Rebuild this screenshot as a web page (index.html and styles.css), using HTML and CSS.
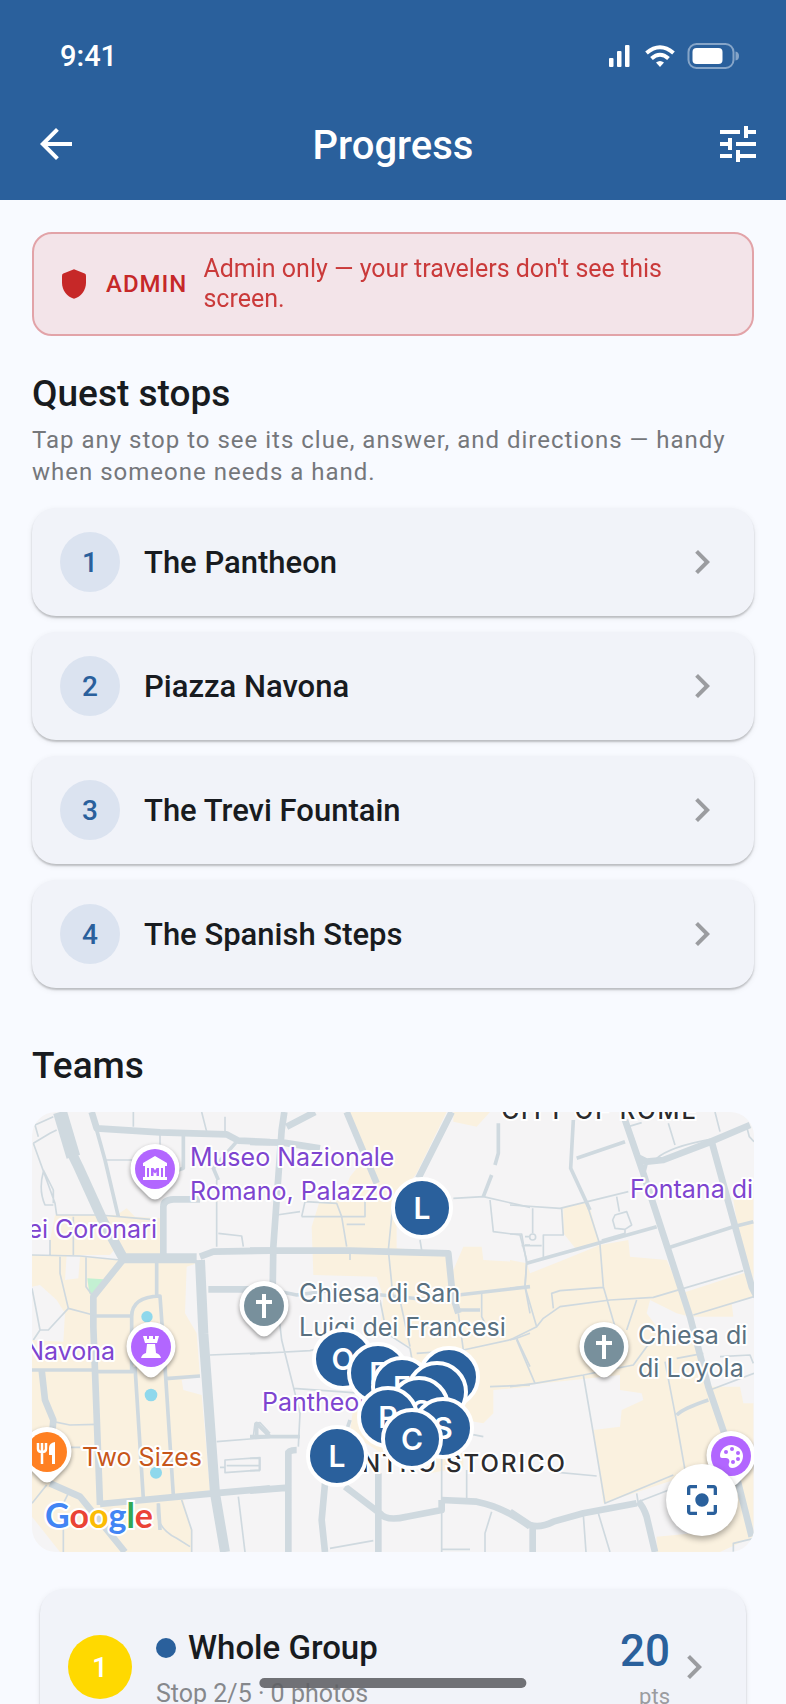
FILE: index.html
```html
<!DOCTYPE html>
<html lang="en">
<head>
<meta charset="utf-8">
<meta name="viewport" content="width=device-width, initial-scale=1">
<title>Progress</title>
<link rel="stylesheet" href="styles.css">
</head>
<body>
<div class="screen">
  <header class="header">
    <div class="status">
      <span class="clock">9:41</span>
      <svg class="status-icons" viewBox="0 0 132 28" aria-hidden="true">
        <g fill="#fff"><rect x="1" y="16" width="4.500" height="9" rx="1"/><rect x="9" y="9" width="4.500" height="16" rx="1"/><rect x="17" y="3" width="4.500" height="22" rx="1"/></g>
        <g fill="none" stroke="#fff" stroke-width="4"><path d="M38.500 11Q52 -0.500 65.500 11"/><path d="M43.500 16.500Q52 9 60.500 16.500"/></g>
        <path d="M48 20.500Q52 17.500 56 20.500L52 25Z" fill="#fff"/>
        <rect x="80.500" y="2" width="45" height="24" rx="8" fill="none" stroke="#86a5c8" stroke-width="2"/>
        <rect x="84.500" y="6" width="30" height="16" rx="4" fill="#fff"/>
        <path d="M127.500 9.500Q131 10 131 14T127.500 18.500Z" fill="#86a5c8"/>
      </svg>
    </div>
    <div class="appbar">
      <button class="icon-button back" aria-label="Back"><svg class="icon" viewBox="0 0 24 24"><path d="M20 11H7.830l5.590-5.590L12 4l-8 8 8 8 1.410-1.410L7.830 13H20z"/></svg></button>
      <h1 class="title">Progress</h1>
      <button class="icon-button filters" aria-label="Filters"><svg class="icon" viewBox="0 0 24 24"><path d="M3 17v2h6v-2H3zM3 5v2h10V5H3zm10 16v-2h8v-2h-8v-2h-2v6h2zM7 9v2H3v2h4v2h2V9H7zm14 4v-2H11v2h10zm-6-4h2V7h4V5h-4V3h-2v6z"/></svg></button>
    </div>
  </header>

  <main class="content">
    <section class="banner">
      <svg class="shield" viewBox="0 0 24 24" aria-hidden="true"><path d="M12 1 20 4.200Q21 4.600 21 5.800V11c0 5.500-3.600 10.500-9 12-5.400-1.500-9-6.500-9-12V5.800Q3 4.600 4 4.200Z"/></svg>
      <strong class="badge">ADMIN</strong>
      <p class="banner-text">Admin only — your travelers don't see this screen.</p>
    </section>

    <h2 class="heading">Quest stops</h2>
    <p class="hint">Tap any stop to see its clue, answer, and directions — handy when someone needs a hand.</p>

    <div class="stops">
      <button class="card"><span class="number">1</span><span class="name">The Pantheon</span><svg class="chevron" viewBox="0 0 24 24"><path d="M10 6 8.590 7.410 13.170 12l-4.580 4.590L10 18l6-6z"/></svg></button>
      <button class="card"><span class="number">2</span><span class="name">Piazza Navona</span><svg class="chevron" viewBox="0 0 24 24"><path d="M10 6 8.590 7.410 13.170 12l-4.580 4.590L10 18l6-6z"/></svg></button>
      <button class="card"><span class="number">3</span><span class="name">The Trevi Fountain</span><svg class="chevron" viewBox="0 0 24 24"><path d="M10 6 8.590 7.410 13.170 12l-4.580 4.590L10 18l6-6z"/></svg></button>
      <button class="card"><span class="number">4</span><span class="name">The Spanish Steps</span><svg class="chevron" viewBox="0 0 24 24"><path d="M10 6 8.590 7.410 13.170 12l-4.580 4.590L10 18l6-6z"/></svg></button>
    </div>

    <h2 class="heading teams-heading">Teams</h2>
    <div class="map">
      <svg class="map-canvas" viewBox="32 12 722 440" preserveAspectRatio="xMidYMid slice" role="img" aria-label="Map of team positions">
        <defs>
          <g id="pin"><path class="pin-body" d="M-18 16A24.500 24.500 0 1 1 18 16L6 28Q0 33 -6 28Z"/></g>
          <g id="church"><use href="#pin"/><circle r="20" fill="#78909c"/><path d="M-2 -12h4v6h6v4h-6v14h-4V-2H-8v-4h6z" fill="#fff"/></g>
        </defs>

        <!-- built-up areas -->
        <g class="area" transform="scale(.33333)">
          <path d="M165 345 350 345 380 325 405 350 490 355 485 462 375 465 350 440 330 465H150L150 420Z"/>
          <path d="M96 465H200L195 540 235 535 240 470 360 480 590 490 560 500 555 640 590 700 600 830 545 840 550 870 605 885 630 1170 550 1200 575 1290 575 1356H180L96 1250V720L190 725 195 640 170 600 120 555 96 560Z"/>
        </g>
        <g class="area" transform="translate(250) scale(.33333)">
          <path d="M300 36H590L500 220 440 300 440 445 590 460 610 510 640 440 695 440 700 480 785 485 790 530 840 560 840 860 730 870 730 940 700 970 640 960 640 1100 540 1120 460 1100 300 1000 310 920 480 900 480 740 390 690 400 590 380 530 190 525 185 380 210 300 280 280 300 230 340 180Z"/>
          <path d="M610 36H720L680 80 610 65Z"/>
        </g>
        <g class="area" transform="translate(510) scale(.33333)">
          <path d="M0 480 50 490 60 520 160 480 270 435 355 420 360 470 470 480 515 580 730 510 730 590 665 610 670 650 540 650 500 640 420 600 410 640 440 680 560 720 600 860 690 860 700 910 730 910V1310L630 1356H440V1310L550 1300 520 1130 280 1210 250 990 330 980 335 930 400 900 395 880 330 870 330 825 0 860Z"/>
          <path d="M160 320 235 305 270 435 200 450 160 400Z"/><path d="M670 300 730 290V520L705 515Z"/>
        </g>
        <g transform="scale(.33333)"><path d="M262 535 310 538 280 590 268 580Z" fill="#c3f0d2"/><g fill="#8fd8ec"><circle cx="441" cy="650" r="17"/><circle cx="453" cy="885" r="19"/><circle cx="468" cy="1118" r="18"/></g></g>

        <!-- streets, west -->
        <g class="street" transform="scale(.33333)">
          <path class="w40" d="M180 36 220 170"/>
          <path class="w30" d="M218 165 235 200 310 365 370 475H590M600 480 610 700 645 1180 675 1356"/>
          <path class="w20" d="M275 36 290 85 480 97 680 103 715 122 810 126M600 470 640 455 810 452M490 465V320Q490 300 520 298H600M370 478 280 590V680L300 1215M300 1212 640 1180 810 1165M125 810 135 900 160 960 155 1020M150 1150 240 1190 375 1356M625 568H810"/>
          <path class="w12" d="M290 90 315 180 355 350M470 485V590M395 820V650Q395 590 480 588L495 800 520 1185M395 648H285M405 800 430 1195M550 100V205L520 215M290 815H400M498 836 600 828M96 810H280M655 240 640 205 710 125M475 1210 480 1290"/>
          <path class="w6" d="M400 36V80M605 36 620 95M675 50V100M480 100V145M315 180H410M650 240V440M655 400 725 408 730 440M130 215Q115 270 135 315H160M100 130 165 310 170 345H300L450 358M100 130 150 100 170 90M105 75 115 110M105 75 160 50M130 210 160 270V310M150 420V465M220 350V465M96 465 240 468 360 480M258 470V560L280 590M180 470V520L205 625 280 645M96 565 120 690H145L205 625M120 690 100 720M630 765 810 758M160 965 210 975 290 973M160 1042H240M205 1180 190 1210M140 1155 96 1210M190 1250V1356M475 1210Q460 1280 530 1315L570 1340M545 1200 575 1290V1356M650 1025 810 1012M675 1080 780 1073V1110L675 1118ZM660 1102H675M680 1097H780M760 1010 765 970 780 968 810 1000M715 1190 735 1356"/>
        </g>
        <!-- streets, centre -->
        <g class="street" transform="translate(250) scale(.33333)">
          <path class="w20" d="M103 36 95 90 70 440 68 570M0 126 100 128 210 145M0 452H300L595 460 605 560M110 80 195 36M290 36 380 250M605 36 505 235M115 1356V1060Q115 1050 140 1050M0 1172 115 1163M225 1356 215 1260 225 1150M385 1120V1356M285 1160 390 1240Q410 1265 470 1250L575 1230V1200M575 1200 680 1205Q760 1220 840 1280M600 560 625 640"/>
          <path class="w12" d="M68 570 140 585 250 570 540 600M745 70 745 160 735 195M725 225 700 290M0 1010H150M20 1010V970L60 1010M300 960 290 990M625 585 840 560M620 630H690"/>
          <path class="w6" d="M80 345 150 335M155 350 165 305 260 310 275 350 290 440M155 350H345V300M290 373H345M300 460V480M430 300 415 450 430 600M510 420 515 450M610 295 700 290 840 322M720 300 730 395 810 405 830 480 825 560 840 640M825 410H840M825 435H840M830 488 840 488M80 590 95 720 150 940 145 1040M0 762 180 752 230 740M130 865 340 880M390 600 410 700 480 745 490 800M450 600 480 740M625 640 640 750 800 715 840 700M695 580V650L720 700M800 715 840 800M640 750 500 760M720 860 840 855M650 1000 700 1010M0 1075H28V1112H0M240 1345 370 1322M575 1060V1356M650 1110V1200M725 1235 705 1300V1356M575 1348H660"/>
        </g>
        <!-- streets, east -->
        <g class="street" transform="translate(510) scale(.33333)">
          <path class="w20" d="M345 60 400 220 540 650 595 860 660 1050 725 1310M380 170 410 185 460 180 590 130 720 75M605 125 645 270 725 560 740 590M0 1235 60 1275Q90 1285 130 1265L220 1240 380 1210M68 1280V1356M385 1205Q400 1220 410 1250L435 1356"/>
          <path class="w12" d="M190 60 182 205 240 330M200 175 345 125M480 442 670 380 730 365M50 490 440 380M500 945Q520 925 595 900M410 185 400 225"/>
          <path class="w6" d="M0 315 150 325 355 275M68 325V400M0 402H35L50 490 45 560 80 680M100 480V405H160L155 325M35 437H95M320 290 328 335M315 345 350 335 365 375 345 388 315 385 308 360ZM345 388V400L275 420M230 310 270 435 280 560 315 680M130 625 125 580 150 572 280 562M0 565 45 560M0 720 80 680 100 655 150 620 300 600 430 592 700 512M380 600 350 690M355 80 395 68M475 70 495 135M440 175Q480 140 600 118M615 36 630 95M710 80 718 110 732 125M550 645 732 590M20 720 75 850M0 860 75 850 220 825 370 795 410 740 450 710M465 785 495 940 525 1110M500 775 580 760M600 870 732 820M630 770 720 765 730 790M220 825 250 1000 285 1210 490 1125M380 1180 385 1210M385 1205 490 1165M120 1115 260 1128M220 1245 228 1356M265 1240 300 1356M670 1356V1330L732 1315"/>
          <circle cx="68" cy="411" r="9" class="w6"/>
        </g>

        <g class="place purple">
          <text x="190" y="66">Museo Nazionale</text><text x="190" y="100">Romano, Palazzo</text>
          <text x="157" y="138" text-anchor="end">ei Coronari</text><text x="115" y="260" text-anchor="end">Navona</text>
          <text x="262" y="311">Pantheon</text><text x="630" y="98">Fontana di</text>
        </g>
        <g class="place slate">
          <text x="299" y="202">Chiesa di San</text><text x="299" y="236">Luigi dei Francesi</text>
          <text x="638" y="244">Chiesa di</text><text x="638" y="277">di Loyola</text>
        </g>
        <text class="place orange" x="82" y="366">Two Sizes</text>
        <text class="district" x="698" y="19" text-anchor="end">CITY OF ROME</text>
        <text class="district" x="567" y="372" text-anchor="end">CENTRO STORICO</text>

        <g transform="translate(155 69)"><use href="#pin"/><circle r="20" fill="#b266ff"/><path fill-rule="evenodd" d="M0 -13 12 -6v3H-12v-3ZM-10 -3H10V8H12V11H-12V8H-10ZM-8 -1V8H-6V-1ZM6 -1V8H8V-1ZM-4 -1V7H-1.500V3L0 4.500 1.500 3V7H4V-1H1.500L0 1.500 -1.500 -1Z" fill="#fff"/></g>
        <g transform="translate(151 247)"><use href="#pin"/><circle r="20" fill="#b266ff"/><path d="M-8 -11h4v3h2v-3h4v3h2v-3h4L6 -4H-6ZM-4 -3H4L5 6Q9 7 10 11H-10Q-9 7 -5 6Z" fill="#fff"/></g>
        <g transform="translate(47 352)"><use href="#pin"/><circle r="20" fill="#ff8022"/><path d="M-9 -9V-3Q-9 0 -5 0T-1 -3V-9M-5 -9V12" fill="none" stroke="#fff" stroke-width="2.500"/><path d="M8 -10V12H5V3H2V-4Q2 -9 8 -10Z" fill="#fff"/></g>
        <use href="#church" x="264" y="206"/><use href="#church" x="604" y="247"/>
        <g transform="translate(731 356)"><use href="#pin"/><circle r="20" fill="#b266ff"/><path d="M0 -11C7 -11 12 -6 12 0S7 12 1 12C-2 12 -3 9 -2 7S-2 2 -5 2H-9Q-11 2 -11 0C-11 -6 -6 -11 0 -11Z" fill="#fff"/><g fill="#b266ff"><circle cx="-5" cy="-4" r="2"/><circle cx="1" cy="-7" r="2"/><circle cx="7" cy="-3" r="2"/><circle cx="7" cy="3" r="2"/><circle cx="2" cy="6" r="2"/></g></g>

        <g class="team">
          <g><circle cx="343" cy="259" r="29"/><text x="343" y="270">O</text></g>
          <g><circle cx="378" cy="273" r="29"/><text x="378" y="284">F</text></g>
          <g><circle cx="402" cy="287" r="29"/><text x="402" y="298">E</text></g>
          <g><circle cx="449" cy="277" r="29"/></g>
          <g><circle cx="437" cy="292" r="29"/></g>
          <g><circle cx="419" cy="307" r="29"/><text x="421" y="322">C</text></g>
          <g><circle cx="388" cy="317" r="29"/><text x="388" y="328">R</text></g>
          <g><circle cx="443" cy="328" r="29"/><text x="443" y="339">S</text></g>
          <g><circle cx="412" cy="339" r="29"/><text x="412" y="350">C</text></g>
          <g><circle cx="337" cy="356" r="29"/><text x="337" y="367">L</text></g>
          <g><circle cx="422" cy="108" r="29"/><text x="422" y="119">L</text></g>
        </g>
        <text class="google" x="45" y="428"><tspan fill="#4285f4">G</tspan><tspan fill="#ea4335">o</tspan><tspan fill="#fbbc05">o</tspan><tspan fill="#4285f4">g</tspan><tspan fill="#34a853">l</tspan><tspan fill="#ea4335">e</tspan></text>
      </svg>
      <button class="focus" aria-label="Center map"><svg viewBox="0 0 24 24"><path d="M12 8c-2.210 0-4 1.790-4 4s1.790 4 4 4 4-1.790 4-4-1.790-4-4-4zm-7 7H3v4c0 1.100.9 2 2 2h4v-2H5v-4zM5 5h4V3H5c-1.100 0-2 .9-2 2v4h2V5zm14-2h-4v2h4v4h2V5c0-1.100-.9-2-2-2zm0 16h-4v2h4c1.100 0 2-.9 2-2v-4h-2v4z"/></svg></button>
    </div>

    <button class="card team-card">
      <span class="rank">1</span>
      <span class="team-info"><span class="team-name"><span class="dot"></span>Whole Group</span><span class="team-meta">Stop 2/5 · 0 photos</span></span>
      <span class="score"><span class="points">20</span><span class="unit">pts</span></span>
      <svg class="chevron" viewBox="0 0 24 24"><path d="M10 6 8.590 7.410 13.170 12l-4.580 4.590L10 18l6-6z"/></svg>
    </button>
  </main>
  <div class="home-indicator"></div>
</div>
</body>
</html>
```
FILE: styles.css
```css
* { box-sizing: border-box; }
body, h1, h2, p { margin: 0; }
body { background: #f8faff; color: #181b20; font-family: Roboto, "Liberation Sans", sans-serif; }
button { margin: 0; border: 0; padding: 0; background: none; color: inherit; font: inherit; text-align: left; }
svg { display: block; flex: none; }

.screen { height: 100vh; overflow: hidden; }

.header { background: #2a609c; color: #fff; }
.status { display: flex; justify-content: space-between; align-items: center; height: 100px; padding: 12px 46px 0 60px; }
.clock { font-size: 29px; font-weight: 500; line-height: 32px; }
.status-icons { width: 132px; height: 28px; }
.appbar { display: grid; grid-template-columns: 1fr auto 1fr; align-items: center; height: 100px; padding: 0 24px 12px; }
.title { font-size: 40px; font-weight: 500; line-height: 48px; padding-top: 4px; }
.icon-button, .icon { width: 48px; height: 48px; fill: #fff; }
.back { margin-left: 8px; }
.filters { justify-self: end; }

.content { padding: 32px; }
.banner { display: flex; align-items: center; gap: 16px; min-height: 104px; padding: 20px 24px; border: 2px solid #e2a3a8; border-radius: 20px; background: #f3e4e9; color: #c62828; }
.shield { width: 32px; height: 32px; fill: #c62828; }
.badge { font-size: 24px; font-weight: 500; letter-spacing: 1px; }
.banner-text { font-size: 25px; line-height: 30px; opacity: 0.9; }

.heading { margin-top: 36px; font-size: 37px; font-weight: 500; line-height: 44px; }
.hint { margin-top: 8px; color: #75777b; font-size: 24px; line-height: 32px; letter-spacing: 1px; }

.stops { display: grid; gap: 16px; margin-top: 20px; }
.card { display: flex; align-items: center; width: 100%; min-height: 108px; padding: 24px 28px; border-radius: 24px; background: #f1f3f9; box-shadow: 0 2px 2px #0003, 0 2px 6px #00000014; }
.number { display: grid; place-items: center; width: 60px; height: 60px; margin-right: 24px; border-radius: 50%; background: #dbe3f0; color: #2a609c; font-size: 28px; font-weight: 500; }
.name { flex: 1; font-size: 31px; font-weight: 500; }
.chevron { width: 48px; height: 48px; fill: #9b9ca0; }

.teams-heading { margin-top: 56px; }
.map { position: relative; height: 440px; margin-top: 24px; border-radius: 24px; overflow: hidden; background: #f5f4f5; }
.map-canvas { width: 100%; height: 100%; }
.area { fill: #faf1df; }
.street { fill: none; stroke: #cfd9df; stroke-linejoin: round; }
.w40 { stroke-width: 42; }
.w30 { stroke-width: 30; }
.w20 { stroke-width: 20; }
.w12 { stroke-width: 11; }
.w6 { stroke-width: 5; }
.place { font-family: Inter, sans-serif; font-size: 25px; stroke: #fff; stroke-width: 4px; stroke-linejoin: round; paint-order: stroke; }
.purple { fill: #7e45d0; }
.slate { fill: #597080; }
.orange { fill: #c7571a; }
.district { fill: #2b2b2d; font-family: Inter, sans-serif; font-size: 24px; font-weight: 500; letter-spacing: 2px; stroke: #fff; stroke-width: 4px; paint-order: stroke; }
.google { font-family: Lato, sans-serif; font-size: 34px; font-weight: 700; stroke: #fff; stroke-width: 4px; paint-order: stroke; }
.pin-body { fill: #fff; filter: drop-shadow(0 2px 2px #0006); }
.team circle { fill: #2a609c; stroke: #fff; stroke-width: 4px; }
.team text { fill: #fff; font-family: Inter, sans-serif; font-size: 30px; font-weight: 600; text-anchor: middle; }
.focus { position: absolute; right: 16px; bottom: 16px; display: grid; place-items: center; width: 72px; height: 72px; border-radius: 50%; background: #fff; box-shadow: 0 3px 6px #0005; }
.focus svg { width: 40px; height: 40px; fill: #2a609c; }

.team-card { width: auto; min-width: calc(100% - 16px); min-height: 156px; margin: 37px 8px 0; }
.rank { display: grid; place-items: center; width: 64px; height: 64px; margin-right: 24px; border-radius: 50%; background: #ffd900; color: #fff; font-size: 28px; font-weight: 500; }
.team-info { flex: 1; display: grid; gap: 10px; padding-top: 4px; }
.team-name { display: flex; align-items: center; gap: 12px; font-size: 33px; font-weight: 500; line-height: 40px; }
.dot { width: 20px; height: 20px; border-radius: 50%; background: #2a609c; }
.team-meta { color: #86888c; font-size: 25px; line-height: 32px; }
.score { display: grid; justify-items: end; padding-top: 8px; }
.points { color: #2a609c; font-size: 44px; font-weight: 500; line-height: 52px; }
.unit { color: #9b9ca0; font-size: 22px; line-height: 40px; }
.home-indicator { position: fixed; left: 50%; bottom: 16px; width: 34%; height: 10px; border-radius: 5px; background: #5d5f63e0; transform: translateX(-50%); }
```
